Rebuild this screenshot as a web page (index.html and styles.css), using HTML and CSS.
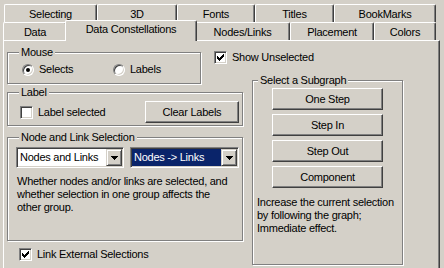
FILE: index.html
```html
<!DOCTYPE html>
<html lang="en">
<head>
    <meta charset="UTF-8">
    <meta name="viewport" content="width=device-width, initial-scale=1.0">
    <title>Data Constellations</title>
    <link rel="stylesheet" href="styles.css">
</head>
<body>

<div class="tabs">
    <div class="tab-row back">
        <div class="tab tab-selecting">Selecting</div>
        <div class="tab tab-3d">3D</div>
        <div class="tab tab-fonts">Fonts</div>
        <div class="tab tab-titles">Titles</div>
        <div class="tab tab-bookmarks">BookMarks</div>
    </div>
    <div class="tab-row front">
        <div class="tab tab-data">Data</div>
        <div class="tab tab-constellations active">Data Constellations</div>
        <div class="tab tab-nodes">Nodes/Links</div>
        <div class="tab tab-placement">Placement</div>
        <div class="tab tab-colors">Colors</div>
    </div>
</div>

<div class="panel">
    <div class="col-left">
        <div class="mouse-row">
            <fieldset class="group mouse-group">
                <legend>Mouse</legend>
                <div class="mouse-body">
                    <label class="opt opt-selects"><span class="radio on"></span>Selects</label>
                    <label class="opt"><span class="radio"></span>Labels</label>
                </div>
            </fieldset>
            <label class="opt show-unselected">
                <span class="check"><svg width="7" height="7" viewBox="0 0 7 7"><path d="M0 2h1v1h1v1h1v-1h1v-1h1v-1h1v-1h1v3h-1v1h-1v1h-1v1h-1v1h-1v-1h-1v-1h-1z"/></svg></span>Show Unselected
            </label>
        </div>

        <fieldset class="group label-group">
            <legend>Label</legend>
            <div class="label-body">
                <label class="opt"><span class="check"></span>Label selected</label>
                <button class="btn btn-clear">Clear Labels</button>
            </div>
        </fieldset>

        <fieldset class="group node-group">
            <legend>Node and Link Selection</legend>
            <div class="combo-row">
                <div class="combo combo-what">
                    <span class="combo-value">Nodes and Links</span>
                    <span class="combo-btn"><svg width="7" height="4" viewBox="0 0 7 4"><path d="M0 0h7v1h-1v1h-1v1h-1v1h-1v-1h-1v-1h-1v-1h-1z"/></svg></span>
                </div>
                <div class="combo combo-how">
                    <span class="combo-value selected">Nodes -&gt; Links</span>
                    <span class="combo-btn"><svg width="7" height="4" viewBox="0 0 7 4"><path d="M0 0h7v1h-1v1h-1v1h-1v1h-1v-1h-1v-1h-1v-1h-1z"/></svg></span>
                </div>
            </div>
            <p class="note node-note">Whether nodes and/or links are selected, and<br>whether selection in one group affects the<br>other group.</p>
        </fieldset>

        <label class="opt link-external">
            <span class="check"><svg width="7" height="7" viewBox="0 0 7 7"><path d="M0 2h1v1h1v1h1v-1h1v-1h1v-1h1v-1h1v3h-1v1h-1v1h-1v1h-1v1h-1v-1h-1v-1h-1z"/></svg></span>Link External Selections
        </label>
    </div>

    <div class="col-right">
        <fieldset class="group subgraph-group">
            <legend>Select a Subgraph</legend>
            <div class="subgraph-body">
                <button class="btn btn-step">One Step</button>
                <button class="btn btn-step">Step In</button>
                <button class="btn btn-step">Step Out</button>
                <button class="btn btn-step">Component</button>
                <p class="note subgraph-note">Increase the current selection<br>by following the graph;<br>Immediate effect.</p>
            </div>
        </fieldset>
    </div>
</div>

</body>
</html>
```

FILE: styles.css
```css
body {
    margin: 0;
    background: #d4d0c8;
    font-family: "Liberation Sans", Arial, sans-serif;
    font-size: 11px;
    line-height: 13px;
    letter-spacing: -0.25px;
    color: #000;
    overflow: hidden;
}

/* tab strip */
.tabs {
    padding: 4px 0 0 3px;
}

.tab-row {
    display: flex;
    height: 18px;
}

.tab-row.back {
    margin-left: 1px;
}

.tab {
    box-sizing: border-box;
    height: 18px;
    padding-top: 1px;
    display: flex;
    align-items: center;
    justify-content: center;
    white-space: nowrap;
    background: #d4d0c8;
    border-top: 1px solid #fff;
    border-left: 1px solid #fff;
    border-right: 1px solid #404040;
    border-radius: 2px 2px 0 0;
    box-shadow: inset -1px 0 #808080;
}

.tab.active {
    height: 21px;
    margin: -2px -2px 0;
    padding: 0 0 3px;
    position: relative;
    z-index: 1;
}

.tab-selecting { width: 93px; }
.tab-3d { width: 80px; }
.tab-fonts { width: 78px; }
.tab-titles { width: 79px; }
.tab-bookmarks { width: 102px; }
.tab-data { width: 64px; }
.tab-constellations { width: 132px; }
.tab-nodes { width: 95px; }
.tab-placement { width: 84px; }
.tab-colors { width: 62px; }

/* page body */
.panel {
    box-sizing: border-box;
    display: flex;
    width: 437px;
    height: 240px;
    margin-left: 3px;
    padding: 5px 0 0 3px;
    border-top: 1px solid #fff;
    border-left: 1px solid #fff;
    border-right: 1px solid #404040;
    box-shadow: inset -1px 0 #808080;
}

.col-left {
    width: 236px;
    flex: none;
}

.col-right {
    margin-left: 9px;
    padding-top: 28px;
}

/* etched group boxes */
.group {
    margin: 0;
    padding: 0;
    min-width: 0;
    border: 1px solid #808080;
    box-shadow: inset 1px 1px #fff, 1px 1px #fff;
}

.group legend {
    padding: 0 2px;
    margin-left: 11px;
    background: #d4d0c8;
}

.mouse-row {
    display: flex;
    align-items: flex-start;
}

.mouse-group {
    width: 194px;
    box-sizing: border-box;
    flex: none;
}

.mouse-body {
    display: flex;
    padding: 4px 0 7px 14px;
}

.opt-selects {
    width: 91px;
}

.show-unselected {
    margin: 5px 0 0 13px;
}

.label-group {
    margin-top: 2px;
}

.label-body {
    display: flex;
    align-items: center;
    justify-content: space-between;
    padding: 2px 3px 2px 12px;
}

.node-group {
    margin-top: 5px;
}

.combo-row {
    display: flex;
    gap: 6px;
    padding: 3px 0 0 8px;
}

.note {
    margin: 0;
    white-space: nowrap;
}

.node-note {
    margin: 7px 0 0;
    padding: 0 4px 26px 9px;
}

.link-external {
    margin: 7px 0 0 12px;
}

.subgraph-group {
    width: 151px;
    box-sizing: border-box;
}

.subgraph-group legend {
    margin-left: 5px;
}

.subgraph-body {
    display: flex;
    flex-direction: column;
    gap: 4px;
    padding: 1px 4px 29px;
}

.subgraph-note {
    margin-top: 4px;
}

/* controls */
.opt {
    display: flex;
    align-items: center;
    gap: 5px;
    white-space: nowrap;
}

.radio {
    box-sizing: border-box;
    width: 12px;
    height: 12px;
    display: flex;
    align-items: center;
    justify-content: center;
    border-radius: 50%;
    border: 1px solid;
    border-color: #808080 #fff #fff #808080;
    box-shadow: inset 1px 1px #404040, inset -1px -1px #d4d0c8;
    background: #fff;
}

.radio.on::after {
    content: "";
    width: 4px;
    height: 4px;
    border-radius: 50%;
    background: #000;
}

.check {
    box-sizing: border-box;
    width: 13px;
    height: 13px;
    padding: 2px 0 0 2px;
    border: 1px solid;
    border-color: #808080 #fff #fff #808080;
    box-shadow: inset 1px 1px #404040, inset -1px -1px #d4d0c8;
    background: #fff;
}

.check svg,
.combo-btn svg {
    display: block;
}

.btn {
    box-sizing: border-box;
    height: 22px;
    padding: 0;
    font: inherit;
    letter-spacing: inherit;
    color: #000;
    background: #d4d0c8;
    border: 1px solid;
    border-color: #fff #404040 #404040 #fff;
    box-shadow: inset -1px -1px #808080;
}

.btn-clear {
    width: 94px;
}

.btn-step {
    width: 111px;
    align-self: center;
}

.combo {
    box-sizing: border-box;
    display: flex;
    height: 21px;
    padding: 1px;
    background: #fff;
    border: 1px solid;
    border-color: #808080 #fff #fff #808080;
    box-shadow: inset 1px 1px #404040, inset -1px -1px #d4d0c8;
}

.combo-what { width: 108px; }
.combo-how { width: 109px; }

.combo-value {
    flex: 1;
    padding-left: 2px;
    line-height: 17px;
    white-space: nowrap;
    overflow: hidden;
}

.combo-value.selected {
    background: #0a246a;
    color: #fff;
}

.combo-btn {
    box-sizing: border-box;
    width: 16px;
    height: 17px;
    display: flex;
    align-items: center;
    justify-content: center;
    padding-top: 1px;
    background: #d4d0c8;
    border: 1px solid;
    border-color: #d4d0c8 #404040 #404040 #d4d0c8;
    box-shadow: inset 1px 1px #fff, inset -1px -1px #808080;
}
```
